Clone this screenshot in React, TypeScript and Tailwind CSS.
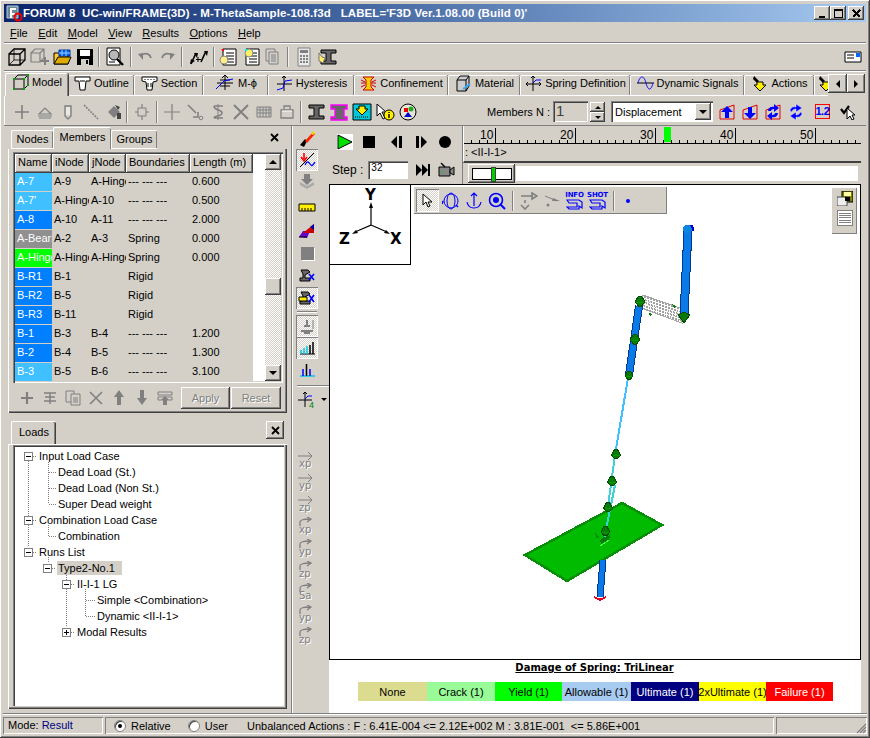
import React from "react";

const RAISED = "shadow-[inset_-1px_-1px_0_#404040,inset_1px_1px_0_#ffffff,inset_-2px_-2px_0_#808080]";
const SUNKEN = "shadow-[inset_1px_1px_0_#808080,inset_2px_2px_0_#404040,inset_-1px_-1px_0_#ffffff]";
const PRESSED = "shadow-[inset_1px_1px_0_#808080,inset_-1px_-1px_0_#ffffff] bg-[repeating-conic-gradient(#ffffff_0_25%,#d4d0c8_0_50%)] bg-[length:2px_2px]";

type P = { children?: React.ReactNode; w?: number; h?: number };
const S = ({ children, w = 18, h = 18 }: P) => (
  <svg width={w} height={h} viewBox={`0 0 ${w} ${h}`} fill="none" className="block shrink-0">{children}</svg>
);

const G = "#808080";
const B = "#0000ff";

/* ---- toolbar icons ---- */
const Cube = ({ c = "#000" }: { c?: string }) => (
  <S w={20} h={20}><path d="M2 7h11v11H2zM2 7l5-5h11v11l-5 5M13 7l5-5" stroke={c} strokeWidth="1.3" /><path d="M2 18l5-5V2M7 13h11" stroke={c} strokeWidth=".8" /></S>
);
const CubePlus = () => (
  <S w={20} h={20}><path d="M1 6h9v9H1zM1 6l4-4h9v9l-4 4M10 6l4-4" stroke={G} strokeWidth="1.2" /><path d="M15 10v8M11 14h8" stroke={G} strokeWidth="2" /></S>
);
const Open = () => (
  <S w={20} h={20}><path d="M2 6h6l1 2h7v9H2z" fill="#ffcc33" stroke="#000" /><path d="M7 3h11v6H7z" fill="#0066ff" stroke="#003399" /><path d="M10 3v6M14 3v6M7 6h11" stroke="#99ccff" /><path d="M2 17l4-7h13l-3 7z" fill="#ddaa00" stroke="#000" /></S>
);
const Save = () => (
  <S w={18} h={18}><path d="M1 1h16v16H1z" fill="#000" /><path d="M4 2h10v6H4z" fill="#fff" /><path d="M5 11h8v6H5z" fill="#d4d0c8" /><path d="M10 12h2v4h-2z" fill="#000" /></S>
);
const Preview = () => (
  <S w={20} h={20}><path d="M2 1h13v17H2z" fill="#fff" stroke="#000" /><circle cx="9" cy="8" r="5" fill="#b8b8b8" stroke="#000" /><path d="M12 12l6 6" stroke="#000" strokeWidth="2.4" /><path d="M4 15h6" stroke="#000" /></S>
);
const Undo = ({ flip = false }: { flip?: boolean }) => (
  <S w={18} h={14}><g transform={flip ? "translate(18 0) scale(-1 1)" : undefined}><path d="M5 5c5-3 9-1 10 3" stroke={G} strokeWidth="1.8" /><path d="M2 4l5 6V3z" fill={G} /></g></S>
);
const ArrowsPM = () => (
  <S w={20} h={18}><path d="M3 16l5-11M13 14l5-11" stroke="#000" strokeWidth="1.6" /><path d="M6 5h4l-1 5zM16 3h4l-1 5zM2 16l1-5 4 2z" fill="#000" /><path d="M10 9v5M8 11.5h5" stroke="#000" /></S>
);
const DocEdit = ({ y = false }: { y?: boolean }) => (
  <S w={20} h={20}><path d="M5 2h13v16H5z" fill="#fff" stroke="#000" /><path d="M8 6h8M8 9h8M8 12h8M8 15h8" stroke="#000" /><circle cx={y ? 8 : 6} cy={y ? 6 : 13} r="4" fill={y ? "#ffee66" : "#ffee88"} stroke="#888" /><path d="M3 2h3v3z" fill={y ? "#00ffff" : "#ff0000"} /></S>
);
const Copies = () => (
  <S w={20} h={20}><path d="M3 2h9v12H3z" stroke={G} /><path d="M6 5h9v12H6z" fill="#d4d0c8" stroke={G} /><path d="M8 8h5M8 10h5M8 12h5M8 14h5" stroke={G} /></S>
);
const Calc = () => (
  <S w={16} h={20}><path d="M2 1h12v18H2z" fill="#e8e8e8" stroke={G} /><path d="M4 3h8v3H4z" fill={G} /><path d="M4 8h2v2H4zM7 8h2v2H7zM10 8h2v2h-2zM4 11h2v2H4zM7 11h2v2H7zM10 11h2v2h-2zM4 14h2v2H4zM7 14h2v2H7zM10 14h2v2h-2z" fill={G} /></S>
);
const Beam = ({ c = "#666", y = false }: { c?: string; y?: boolean }) => (
  <S w={20} h={18}><path d="M3 2h15v3h-5v8h5v3H3v-3h5V5H3z" fill={c} stroke="#000" />{y && <path d="M1 5l3 4 3 1-2 5-4-2z" fill="#ffee66" stroke="#777" />}</S>
);
const Card = () => (
  <S w={18} h={12}><path d="M1 1h16v10H1z" fill="#fff" stroke="#000" /><path d="M12 2h4v4h-4z" fill="#0066ff" /><path d="M3 4h7M3 7h7" stroke="#000" /></S>
);

/* ---- tab icons ---- */
const TModel = () => (
  <S w={17} h={17}><path d="M2 5h10v10H2zM2 5l4-4h10v10l-4 4M12 5l4-4" stroke="#000" /><path d="M1 4h2v2H1zM11 4h2v2h-2zM1 14h2v2H1zM11 14h2v2h-2zM15 0h2v2h-2zM15 10h2v2h-2z" fill="#00a000" /></S>
);
const TOutline = () => (
  <S w={17} h={15}><path d="M1 1h15v4h-4l-1 9H6L5 5H1z" stroke="#000" fill="#fff" /><path d="M6 5h5" stroke="#000" /></S>
);
const TSection = () => (
  <S w={17} h={15}><path d="M1 1h15v4l-4 1-1 8H6L5 6 1 5z" stroke="#000" fill="#fff" /><path d="M4 3v1M7 3v1M10 3v1M13 3v1M7 7v4M10 7v4" stroke="#000" /></S>
);
const TMphi = () => (
  <S w={20} h={18}><path d="M10 1v15M2 9h16" stroke="#000" /><path d="M7 4l3-3 3 3M5 6h10M5 12h10" stroke="#000" /><path d="M1 15l8-8 9-2" stroke={B} /></S>
);
const THyst = () => (
  <S w={17} h={17}><path d="M8 1v15M1 9h15" stroke="#000" /><path d="M6 3l2-2 2 2" stroke="#000" /><path d="M1 15l6-2 2-7 7-1" stroke={B} /></S>
);
const TConf = () => (
  <S w={17} h={17}><path d="M3 2h11l-3 3v7l3 3H3l3-3V5z" fill="#ffcc00" stroke="#cc0000" /><path d="M1 8h5M11 8h5M1 5l4 2M16 5l-4 2M1 12l4-2M16 12l-4-2" stroke="#cc0000" /></S>
);
const TMat = () => (
  <S w={17} h={17}><path d="M2 5h9v11H2zM2 5l3-4h9v10l-3 5M11 5l3-4" fill="#ccc" stroke="#000" /><path d="M8 14l7-5" stroke="#33aaff" strokeWidth="2" /></S>
);
const TSpring = () => (
  <S w={17} h={17}><path d="M8 1v15M1 9h15" stroke="#000" /><path d="M6 3l2-2 2 2M14 7l2 2-2 2M3 7L1 9l2 2" stroke="#000" /><path d="M8 8l3-3h5" stroke={B} /></S>
);
const TWave = () => (
  <S w={17} h={14}><path d="M0 7h17" stroke="#000" /><path d="M1 7c2-8 6-8 8 0s5 8 7 0" stroke={B} /></S>
);
const TAct = () => (
  <S w={17} h={17}><path d="M3 1l5 5-2 2-4-4z" fill="#000" /><path d="M6 7h6v3h3l-6 6-6-6h3z" fill="#ffee00" stroke="#000" /></S>
);

/* ---- row 2 ---- */
const d = { stroke: G, strokeWidth: 1.6 };
const dis: React.ReactNode[] = [
  <S key="a"><path d="M9 2v14M2 9h14" {...d} /></S>,
  <S key="b"><path d="M3 11l6-6 6 6zM2 13h14M3 15h12" {...d} strokeWidth={1.2} /></S>,
  <S key="c"><path d="M6 3h6v10l-3 3-3-3z" stroke={G} fill="#d4d0c8" strokeWidth={1.4} /><path d="M8 4v8M10 4v8" stroke="#fff" /></S>,
  <S key="d"><path d="M2 2l14 14" stroke={G} strokeWidth={1.6} strokeDasharray="2 1" /></S>,
  <S key="e"><path d="M3 9l6-6 6 6-6 6z" fill={G} /><path d="M10 2l5 2-2 3zM12 10h4v6h-4z" fill="#444" /></S>,
];
const dis2: React.ReactNode[] = [
  <S key="f"><path d="M9 1v16M2 9h14" {...d} strokeWidth={1.2} /><path d="M5 5h8v8H5z" fill="#d4d0c8" stroke={G} /></S>,
];
const dis3: React.ReactNode[] = [
  <S key="g"><path d="M9 1v16M1 9h16" {...d} strokeWidth={1.2} /></S>,
  <S key="h"><path d="M2 2l8 8M12 9v5h-5" {...d} /><circle cx="15" cy="15" r="1.8" stroke={G} /></S>,
  <S key="i"><path d="M5 3h9M5 15h9M5 3c0 5 8 3 8 7s-8 2-8 5" {...d} /><path d="M9 1v16" stroke={G} /></S>,
  <S key="j"><path d="M2 2l14 14M16 2L2 16" {...d} strokeWidth={2} /></S>,
  <S key="k"><path d="M2 4h14v10H2zM2 7h14M2 10h14M5 4v10M8 4v10M11 4v10M14 4v10" stroke={G} /></S>,
  <S key="l"><path d="M3 7h12v8H3zM6 7V3h6v4" stroke={G} strokeWidth={1.3} /><path d="M4 8h10" stroke="#fff" /></S>,
];
const ToolBeam = () => <Beam />;
const PinkBeam = () => (
  <S w={20} h={18}><path d="M2 2h16v4h-3v8h3v3H2v-3h4V6H2z" fill="#666" stroke="#ff00ff" strokeWidth={1.4} /></S>
);
const BoxDown = () => (
  <S w={20} h={18}><path d="M1 1h18v16H1z" fill="#00c8d8" stroke="#000" /><path d="M7 3h6v3h3l-6 6-6-6h3z" fill="#ffee00" stroke="#000" /><path d="M3 14h14" stroke="#000" strokeDasharray="1 1" /></S>
);
const CursorInfo = () => (
  <S w={20} h={18}><path d="M2 1v12l3-3 3 6 2-1-3-6h4z" fill="#fff" stroke="#000" /><circle cx="14" cy="12" r="5" fill="#ffee00" stroke="#000" /><path d="M14 9v1M14 11v4" stroke="#000" strokeWidth="1.4" /></S>
);
const Nodes3 = () => (
  <S w={18} h={18}><circle cx="9" cy="9" r="8" fill="#e8e4d8" stroke="#000" /><path d="M5 5h4v4H5z" fill="#e00" /><circle cx="12" cy="6" r="2.5" fill="#2a2" /><path d="M9 9l4 5H5z" fill="#00c" /></S>
);
const House = ({ kind }: { kind: number }) => (
  <S w={16} h={16}>
    <path d="M1 6l14-5v14H1z" stroke="#e00000" fill="none" />
    {kind === 0 && <path d="M8 2l6 6h-4v6H6V8H2z" fill={B} />}
    {kind === 1 && <path d="M6 3h4v6h4l-6 6-6-6h4z" fill={B} />}
    {kind === 2 && <path d="M3 7c0-3 3-5 6-4V0l5 4-5 4V5c-2 0-3 1-3 2zM13 9c0 3-3 5-6 4v3l-5-4 5-4v3c2 0 3-1 3-2z" fill={B} />}
  </S>
);
const Spin = () => (
  <S w={16} h={16}><path d="M2 7c0-3 3-5 6-4V0l6 4-6 4V5C6 5 4 6 4 8zM14 9c0 3-3 5-6 4v3l-6-4 6-4v3c2 0 4-1 4-3z" fill={B} stroke="#fff" strokeWidth=".4" /></S>
);
const Num12 = () => (
  <div className="w-[15px] h-[15px] border-[1.500px] border-[#ff0000] text-[#0000ff] text-[11px] leading-[12px] text-center tracking-[-0.5px] font-bold">1.2</div>
);
const CheckCursor = () => (
  <S w={16} h={16}><path d="M1 5l3 4 5-7" stroke="#000" strokeWidth="2.2" /><path d="M7 4v11l3-3 2 4 2-1-2-4h3z" fill="#fff" stroke="#000" /></S>
);

/* ---- vertical tool column ---- */
const V: { n: React.ReactNode; mt: string; p?: boolean; h: string }[] = [
  { n: <S><path d="M2 15l5-6 2 2-3 6z" fill="#000" /><path d="M7 11l8-9 2 2-8 9z" fill="#ff2200" /><path d="M13 4l3-3 1 2-2 2z" fill="#ffdd00" /></S>, mt: "mt-0", h: "h-[21px]" },
  { n: <S><path d="M2 16L16 2" stroke="#000" /><path d="M6 2v6M3 6l3 4 3-4" stroke="#f00" strokeWidth="1.6" /><path d="M7 14c2-4 3-4 5-1s3 1 5-2" stroke={B} strokeWidth="1.3" /></S>, mt: "mt-0", p: true, h: "h-[22px]" },
  { n: <S><path d="M6 1h6v5h3l-6 6-6-6h3z" fill={G} /><path d="M2 9l7 4 7-4v3l-7 4-7-4z" fill="#aaa" /></S>, mt: "mt-0", h: "h-[22px]" },
  { n: <S h={10}><path d="M1 1h16v7H1z" fill="#ffee00" stroke="#000" /><path d="M4 5v3M7 5v3M10 5v3M13 5v3" stroke="#000" /></S>, mt: "mt-[4px]", h: "h-[22px]" },
  { n: <S><path d="M1 15l4-6h7l-3 7z" fill="#6600cc" /><path d="M16 2v9H5z" fill="#cc0000" /><path d="M12 5l4-3v6z" fill="#0000aa" /><path d="M1 15h8" stroke="#000" /></S>, mt: "mt-[1px]", h: "h-[22px]" },
  { n: <div className="w-[13px] h-[13px] bg-[#808080] shadow-[1px_1px_0_#fff]" />, mt: "mt-0", h: "h-[22px]" },
  { n: <S><path d="M3 4h7l2 2-5 3v3h5v3H2v-3h3V8z" fill="#666" stroke="#000" /><path d="M11 8l5 6M16 8l-5 6" stroke={B} strokeWidth="1.6" /></S>, mt: "mt-0", h: "h-[22px]" },
  { n: <S><path d="M3 3h7l2 2-5 3v4h5v3H2v-3h3V7z" fill="#666" stroke="#000" /><path d="M1 8h8v4H1z" fill="#ffee00" stroke="#000" /><path d="M11 6l5 7M16 6l-5 7" stroke={B} strokeWidth="1.6" /></S>, mt: "mt-[1px]", p: true, h: "h-[22px]" },
];
const V2: { n: React.ReactNode; mt: string; p?: boolean; h: string }[] = [
  { n: <S><path d="M9 3v6M6 9h6M3 14h12M6 16h6" stroke={G} strokeWidth="2" /><path d="M15 3v9" stroke={G} /></S>, mt: "mt-0", p: true, h: "h-[22px]" },
  { n: <S><path d="M2 15h15" stroke="#000" /><path d="M15 3v12M12 6v9" stroke="#000" strokeWidth="1.5" /><path d="M3 11v4M6 9v6M9 7v8" stroke="#00c8e8" strokeWidth="1.5" /></S>, mt: "mt-0", p: true, h: "h-[22px]" },
  { n: <S><path d="M2 14h15" stroke="#00c8e8" strokeWidth="1.5" /><path d="M5 7v7M12 7v7" stroke={B} strokeWidth="1.5" /><path d="M8.500 2v12" stroke="#000" strokeWidth="1.5" /></S>, mt: "mt-[1px]", h: "h-[22px]" },
];
const disSide = ["xp", "yp", "zp", "xp", "yp", "zp", "Sa", "yp", "zp"];
const SideDis = ({ t, i }: { t: string; i: number }) => (
  <div className="w-[18px] h-[22px] relative text-[#808080]">
    <svg width="18" height="10" fill="none" className="block">
      {i < 3 ? <path d="M1 5h14M11 1l4 4-4 4" stroke={G} /> : <path d="M3 9V5c0-2 3-3 10-3M10 0l4 2-4 3" stroke={G} strokeWidth="1.3" />}
    </svg>
    <span className="absolute left-[2px] top-[8px] text-[10px] leading-[10px] font-['DejaVu_Sans'] [text-shadow:1px_1px_0_#fff]">{t}</span>
  </div>
);

/* ---- table ---- */
const rows: [string, string, string, string, string, string][] = [
  ["A-7", "A-9", "A-Hinge", "--- --- ---", "0.600", "bg-[#40c0ff]"],
  ["A-7'", "A-Hinge", "A-10", "--- --- ---", "0.500", "bg-[#40c0ff]"],
  ["A-8", "A-10", "A-11", "--- --- ---", "2.000", "bg-[#0080ff]"],
  ["A-Bearing", "A-2", "A-3", "Spring", "0.000", "bg-[#909090]"],
  ["A-Hinge", "A-Hinge", "A-Hinge", "Spring", "0.000", "bg-[#00ff00]"],
  ["B-R1", "B-1", "", "Rigid", "", "bg-[#0080ff]"],
  ["B-R2", "B-5", "", "Rigid", "", "bg-[#0080ff]"],
  ["B-R3", "B-11", "", "Rigid", "", "bg-[#0080ff]"],
  ["B-1", "B-3", "B-4", "--- --- ---", "1.200", "bg-[#0080ff]"],
  ["B-2", "B-4", "B-5", "--- --- ---", "1.300", "bg-[#0080ff]"],
  ["B-3", "B-5", "B-6", "--- --- ---", "3.100", "bg-[#40c0ff]"],
];
const headers: [string, string][] = [["Name", "w-[37px]"], ["iNode", "w-[37px]"], ["jNode", "w-[37px]"], ["Boundaries", "w-[64px]"], ["Length (m)", "w-[63px]"]];

const tree: { t: string; pl: string; box?: string; sel?: boolean }[] = [
  { t: "Input Load Case", pl: "pl-[11px]", box: "-" },
  { t: "Dead Load (St.)", pl: "pl-[43px]" },
  { t: "Dead Load (Non St.)", pl: "pl-[43px]" },
  { t: "Super Dead weight", pl: "pl-[43px]" },
  { t: "Combination Load Case", pl: "pl-[11px]", box: "-" },
  { t: "Combination", pl: "pl-[43px]" },
  { t: "Runs List", pl: "pl-[11px]", box: "-" },
  { t: "Type2-No.1", pl: "pl-[30px]", box: "-", sel: true },
  { t: "II-I-1 LG", pl: "pl-[49px]", box: "-" },
  { t: "Simple <Combination>", pl: "pl-[82px]" },
  { t: "Dynamic <II-I-1>", pl: "pl-[82px]" },
  { t: "Modal Results", pl: "pl-[49px]", box: "+" },
];

const legend: [string, string][] = [
  ["None", "bg-[#dcdc90] text-black w-[69px]"],
  ["Crack (1)", "bg-[#98fb98] text-black w-[68px]"],
  ["Yield (1)", "bg-[#00ff00] text-black w-[67px]"],
  ["Allowable (1)", "bg-[#a6caf0] text-black w-[69px]"],
  ["Ultimate (1)", "bg-[#000080] text-white w-[68px]"],
  ["2xUltimate (1)", "bg-[#ffff00] text-black w-[67px]"],
  ["Failure (1)", "bg-[#ff0000] text-white w-[67px]"],
];

const tabs: [string, React.ReactNode, string][] = [
  ["Model", <TModel />, "w-[63px]"],
  ["Outline", <TOutline />, "w-[66px]"],
  ["Section", <TSection />, "w-[69px]"],
  ["M-ϕ", <TMphi />, "w-[65px]"],
  ["Hysteresis", <THyst />, "w-[86px]"],
  ["Confinement", <TConf />, "w-[94px]"],
  ["Material", <TMat />, "w-[72px]"],
  ["Spring Definition", <TSpring />, "w-[110px]"],
  ["Dynamic Signals", <TWave />, "w-[114px]"],
  ["Actions", <TAct />, "w-[70px]"],
];

const Sep = ({ h = "h-[20px]", mx = "mx-[6px]" }: { h?: string; mx?: string }) => (
  <div className={`w-[2px] ${h} ${mx} border-l border-[#808080] border-r-white bg-white/70 shrink-0`} />
);
const Tb = ({ children, w = "w-[22.500px]" }: { children: React.ReactNode; w?: string }) => (
  <div className={`${w} flex justify-center items-center shrink-0`}>{children}</div>
);
const Arrow = ({ dir }: { dir: "u" | "d" | "l" | "r" }) => {
  const pts = { u: "0,5 8,5 4,1", d: "0,1 8,1 4,5", l: "5,0 5,8 1,4", r: "1,0 1,8 5,4" }[dir];
  return <svg width={dir === "u" || dir === "d" ? 8 : 6} height={dir === "u" || dir === "d" ? 6 : 8}><polygon points={pts} fill="#000" /></svg>;
};

const Hex = ({ x, y, r = 4.500 }: { x: number; y: number; r?: number }) => (
  <g>
    <polygon points={`${x - r},${y + 1} ${x - 1.500},${y - r} ${x + 1.500},${y - r} ${x + r},${y + 1} ${x + 1.500},${y + r} ${x - 1.500},${y + r}`} fill="#0a7a0a" stroke="#004d00" strokeWidth="1" />
    <path d={`M${x - r + 1} ${y + 1}H${x + r - 1}`} stroke="#00a000" strokeWidth="1" fill="none" />
  </g>
);

const Scene = () => {
  const hatch: React.ReactNode[] = [];
  for (let i = 0; i < 26; i++) {
    const t = i / 25;
    const x1 = 643 + 37 * t, y1 = 295 + 13 * t, x2 = 641 + 41 * t, y2 = 308 + 15 * t;
    hatch.push(<line key={i} x1={x1} y1={y1} x2={x2} y2={y2} stroke="#a0a0a0" strokeWidth="1" strokeDasharray="2 1" />);
  }
  return (
    <svg width="531" height="474" viewBox="330 185 531 474" fill="none" shapeRendering="crispEdges" className="block">
      <polygon points="643,295 680,308 682,323 641,308" fill="#ffffff" stroke="#a8a8a8" />
      {hatch}
      <path d="M688 229L684 316" stroke="#003a88" strokeWidth="9" />
      <path d="M688 229L684 316" stroke="#0a7ae8" strokeWidth="7" />
      <circle cx="687.500" cy="229" r="4.500" fill="#0a86e0" />
      <path d="M691 225l2 3v3" stroke="#0000c0" strokeWidth="2" />
      <path d="M639 306L629 375" stroke="#003a88" strokeWidth="8" />
      <path d="M639 306L629 375" stroke="#0a7ae8" strokeWidth="6" />
      <path d="M628 378L615 455" stroke="#40c0ff" strokeWidth="2" />
      <path d="M615 455L604 535" stroke="#40d0d8" strokeWidth="2" />
      <polygon points="525,555 622,503 662,525 567,581" fill="#00bb00" stroke="#078f07" strokeWidth="2.500" />
      <path d="M615 485L604 540" stroke="#40d0d8" strokeWidth="2" />
      <path d="M603 560L600 597" stroke="#003a88" strokeWidth="7" />
      <path d="M603 560L600 597" stroke="#0a7ae8" strokeWidth="5" />
      <path d="M594 597l6 3 6-3M600 601v-3" stroke="#e00020" strokeWidth="2" />
      <Hex x={616} y={454} />
      <Hex x={612} y={481} />
      <Hex x={608} y={507} />
      <Hex x={605.500} y={531} />
      <path d="M600 540l4-3 6-2-1 6-8 3z" fill="#0a7a0a" />
      <path d="M600 546l9-6" stroke="#40ff40" />
      <path d="M595 533l4 3-2 3z" fill="#078f07" />
      <Hex x={629} y={375} r={4} />
      <Hex x={635} y={339} r={5} />
      <Hex x={640} y={301} r={5} />
      <path d="M678 315l6-3 6 3-6 8z" fill="#0a7a0a" stroke="#004d00" />
      <path d="M672 304l4 2-2 2z" fill="#0a7a0a" />
      <path d="M649 313l3 1-2 2z" fill="#0a7a0a" />
    </svg>
  );
};

const Ruler = () => {
  const t: React.ReactNode[] = [];
  for (let i = 0; i < 50; i++) {
    const x = 31 + i * 8 - 24;
    const major = (i - 3) % 10 === 0;
    t.push(<line key={i} x1={x} x2={x} y1={major ? 2 : 14} y2={17} stroke="#000" />);
  }
  const labels = [10, 20, 30, 40, 50];
  return (
    <svg width="398" height="19" className="block" shapeRendering="crispEdges" fill="none">
      <line x1="0" x2="398" y1="17.500" y2="17.500" stroke="#000" />
      {t}
      {labels.map((l, i) => (
        <text key={l} x={16 + i * 80} y="13" fontSize="12" fill="#000" fontFamily="Liberation Sans">{l}</text>
      ))}
      <rect x="200" y="1" width="7" height="15" fill="#00ff00" />
    </svg>
  );
};

export default function App() {
  return (
    <div className="w-[870px] h-[738px] overflow-hidden bg-[#d4d0c8] text-black text-[11px] leading-[14px] font-['Liberation_Sans',sans-serif] flex flex-col pt-[4px] shadow-[inset_-1px_-1px_0_#404040,inset_1px_1px_0_#ffffff,inset_-2px_-2px_0_#808080]">
      {/* Title */}
      <div className="h-[18px] mx-[4px] shrink-0 flex items-center bg-gradient-to-r from-[#0a246a] to-[#a6caf0] text-white font-bold text-[11.500px] pl-[1px]">
        <svg width="18" height="18" className="shrink-0 block" fill="none"><path d="M2 2h11v12H2z" fill="#6a8a9a" stroke="#bcd" /><path d="M5 4h6v2H7v3h3v2H7v3H5z" fill="#fff" /><circle cx="13" cy="13" r="3.500" stroke="#e00" strokeWidth="2" /></svg>
        <span className="whitespace-pre tracking-[0.1px]">FORUM 8  UC-win/FRAME(3D) - M-ThetaSample-108.f3d   LABEL='F3D Ver.1.08.00 (Build 0)'</span>
        <div className="ml-auto flex mr-[2px]">
          {[
            <path key="m" d="M3 9h6v2H3z" fill="#000" />,
            <path key="x" d="M2.500 2.500h8v8h-8zM2 3h9" stroke="#000" />,
            <path key="c" d="M3 3l7 7M10 3l-7 7" stroke="#000" strokeWidth="1.500" />,
          ].map((p, i) => (
            <div key={i} className={`w-[16px] h-[14px] bg-[#d4d0c8] flex items-center justify-center ${RAISED} ${i === 2 ? "ml-[2px]" : ""}`}>
              <svg width="13" height="13" fill="none" shapeRendering="crispEdges">{p}</svg>
            </div>
          ))}
        </div>
      </div>

      {/* Menu */}
      <div className="h-[21px] mx-[4px] shrink-0 flex items-center gap-[10.500px] pl-[6px] pt-[1px] border-b border-b-[#808080] shadow-[0_1px_0_#fff]">
        {["File", "Edit", "Model", "View", "Results", "Options", "Help"].map((m) => (
          <span key={m}><span className="underline">{m[0]}</span>{m.slice(1)}</span>
        ))}
      </div>

      {/* Main toolbar */}
      <div className="h-[28px] mx-[4px] shrink-0 flex items-center pl-[2px] border-b border-b-[#808080] shadow-[0_1px_0_#fff]">
        <Tb><Cube /></Tb><Tb><CubePlus /></Tb><Tb><Open /></Tb><Tb><Save /></Tb>
        <Sep mx="mx-[2px]" /><Tb w="w-[26px]"><Preview /></Tb><Sep mx="mx-[2px]" />
        <Tb><Undo /></Tb><Tb><Undo flip /></Tb><Sep mx="mx-[2px]" /><Tb w="w-[26px]"><ArrowsPM /></Tb><Sep mx="mx-[2px]" />
        <Tb><DocEdit /></Tb><Tb><DocEdit y /></Tb><Tb><Copies /></Tb><Sep mx="mx-[2px]" />
        <Tb w="w-[26px]"><Calc /></Tb><Tb w="w-[22px]"><Beam y /></Tb>
        <div className="ml-auto mr-[4px]"><Card /></div>
      </div>

      {/* Tabs */}
      <div className="h-[24px] mt-[1px] mx-[4px] shrink-0 flex items-end relative">
        {tabs.map(([t, ic, w], i) => (
          <div key={t} className={`${w} shrink-0 flex items-center justify-center gap-[3px] bg-[#d4d0c8] border-t border-l border-white rounded-t-[2px] shadow-[inset_-1px_0_0_#808080,1px_0_0_#404040] ${i === 0 ? "h-[23px] z-10 pb-[6px] ml-[1px]" : "h-[21px] border-b border-b-white pb-[5px]"}`}>
            {ic}<span className="whitespace-nowrap">{t}</span>
          </div>
        ))}
        <div className="w-[14px] h-[21px] overflow-hidden border-t border-l border-white border-b border-b-white pl-[2px] pb-[5px] flex items-center shrink-0">
          <TAct />
        </div>
        <div className={`w-[19px] h-[19px] mb-[3px] flex items-center justify-center ${RAISED}`}><Arrow dir="l" /></div>
        <div className={`w-[18px] h-[19px] mb-[3px] flex items-center justify-center ${RAISED}`}><Arrow dir="r" /></div>
      </div>

      {/* Secondary toolbar */}
      <div className="h-[29px] mx-[4px] shrink-0 flex items-center pl-[5px] pt-[2px] border-l border-white">
        {dis.map((n, i) => <Tb key={i} w="w-[23px]">{n}</Tb>)}
        <Sep h="h-[22px]" mx="mx-[1px]" />
        {dis2.map((n, i) => <Tb key={i} w="w-[25px]">{n}</Tb>)}
        <div className="w-[6px] flex justify-center shrink-0"><Sep h="h-[22px]" mx="mx-0" /></div>
        {dis3.map((n, i) => <Tb key={i} w="w-[23px]">{n}</Tb>)}
        <div className="w-[6px] flex justify-center shrink-0"><Sep h="h-[22px]" mx="mx-0" /></div>
        <Tb w="w-[23px]"><ToolBeam /></Tb><Tb w="w-[23px]"><PinkBeam /></Tb><Tb w="w-[23px]"><BoxDown /></Tb><Tb w="w-[23px]"><CursorInfo /></Tb><Tb w="w-[23px]"><Nodes3 /></Tb>
        <span className="w-[131px] text-right whitespace-nowrap">Members N :</span>
        <div className={`w-[35px] h-[21px] ml-[3px] pl-[3px] text-[15px] leading-[20px] text-[#404040] ${SUNKEN}`}>1</div>
        <div className="w-[15px] ml-[2px] flex flex-col">
          <div className={`h-[10px] flex items-center justify-center ${RAISED}`}><svg width="6" height="4"><polygon points="0,4 6,4 3,1" fill="#000" /></svg></div>
          <div className={`h-[10px] flex items-center justify-center ${RAISED}`}><svg width="6" height="4"><polygon points="0,1 6,1 3,4" fill="#000" /></svg></div>
        </div>
        <div className={`w-[102px] h-[21px] ml-[6px] bg-white flex items-center pl-[4px] pr-[2px] ${SUNKEN}`}>
          <span className="flex-1">Displacement</span>
          <div className={`w-[16px] h-[17px] bg-[#d4d0c8] flex items-center justify-center ${RAISED}`}><Arrow dir="d" /></div>
        </div>
        <div className="ml-[2px] flex items-center">
          <Tb w="w-[23px]"><House kind={0} /></Tb>
          <Tb w="w-[23px]"><House kind={1} /></Tb>
          <Tb w="w-[23px]"><House kind={2} /></Tb>
          <Tb w="w-[23px]"><Spin /></Tb>
          <Tb w="w-[30px]"><Num12 /></Tb>
          <Tb w="w-[22px]"><CheckCursor /></Tb>
        </div>
      </div>

      {/* Body */}
      <div className="flex-1 min-h-0 flex mx-[4px] border-t border-t-[#808080]">
        {/* Left column */}
        <div className="w-[283px] shrink-0 flex flex-col pt-px pl-[4px]">
          <div className="h-[286px] shrink-0 flex flex-col">
            <div className="h-[22px] shrink-0 flex items-end relative pl-[3px]">
              {[["Nodes", "w-[42px]", false], ["Members", "w-[58px]", true], ["Groups", "w-[46px]", false]].map(([t, w, a]) => (
                <div key={t as string} className={`${w} flex items-center justify-center border-t border-l border-white shadow-[inset_-1px_0_0_#808080] rounded-t-[2px] ${a ? "h-[22px] z-10 bg-[#d4d0c8] pb-[3px]" : "h-[19px] border-b border-b-white pb-[1px]"}`}>{t as string}</div>
              ))}
              <span className="ml-auto mr-[8px] mb-[7px]">
                <svg width="9" height="9" fill="none" className="block"><path d="M1 1l7 7M8 1L1 8" stroke="#000" strokeWidth="1.800" /></svg>
              </span>
            </div>
            <div className="flex-1 min-h-0 flex flex-col border-l border-white pt-[3px] px-[4px] shadow-[inset_-1px_-1px_0_#404040,inset_-2px_-2px_0_#808080]">
              <div className={`h-[231px] w-[270px] p-[2px] shrink-0 flex ${SUNKEN}`}>
                <div className="w-[250px] bg-white shrink-0 overflow-hidden">
                  <div className="flex h-[19px] w-[238px]">
                    {headers.map(([h, w]) => <div key={h} className={`${w} ${RAISED} bg-[#d4d0c8] pl-[3px] leading-[17px] whitespace-nowrap overflow-hidden shrink-0`}>{h}</div>)}
                  </div>
                  {rows.map((r) => (
                    <div key={r[0]} className="flex h-[19px] w-[238px] bg-[#d4d0c8] leading-[17px]">
                      <div className={`w-[37px] ${r[5]} mb-px text-white pl-[2px] overflow-hidden whitespace-nowrap shrink-0`}>{r[0]}</div>
                      <div className="w-[37px] pl-[2px] overflow-hidden whitespace-nowrap shrink-0">{r[1]}</div>
                      <div className="w-[37px] pl-[2px] overflow-hidden whitespace-nowrap shrink-0">{r[2]}</div>
                      <div className="w-[64px] pl-[2px] whitespace-nowrap shrink-0">{r[3]}</div>
                      <div className="w-[63px] pl-[2px] whitespace-nowrap shrink-0">{r[4]}</div>
                    </div>
                  ))}
                </div>
                <div className="flex-1 flex flex-col bg-[repeating-conic-gradient(#ffffff_0_25%,#d4d0c8_0_50%)] bg-[length:2px_2px]">
                  <div className={`h-[16px] bg-[#d4d0c8] flex items-center justify-center ${RAISED}`}><Arrow dir="u" /></div>
                  <div className={`h-[17px] mt-[108px] bg-[#d4d0c8] ${RAISED}`} />
                  <div className={`h-[16px] mt-auto bg-[#d4d0c8] flex items-center justify-center ${RAISED}`}><Arrow dir="d" /></div>
                </div>
              </div>
              <div className="flex items-center h-[25px] pl-[2px] mt-[2px]">
                <Tb w="w-[23px]"><S w={14} h={14}><path d="M7 1v12M1 7h12" stroke={G} strokeWidth="2.200" /></S></Tb>
                <Tb w="w-[23px]"><S w={14} h={14}><path d="M1 2h12M2 6h10M7 2v11M1 10h12" stroke={G} strokeWidth="1.500" /></S></Tb>
                <Tb w="w-[23px]"><S w={16} h={16}><path d="M1 1h8v11H1z" fill="#d4d0c8" stroke={G} /><path d="M6 4h9v11H6z" fill="#d4d0c8" stroke={G} /><path d="M8 8h5M8 10h5M8 12h5" stroke={G} /></S></Tb>
                <Tb w="w-[23px]"><S w={14} h={14}><path d="M1 1l12 12M13 1L1 13" stroke={G} strokeWidth="1.600" /></S></Tb>
                <Tb w="w-[23px]"><S w={12} h={15}><path d="M6 0l5 7H8v8H4V7H1z" fill={G} /></S></Tb>
                <Tb w="w-[23px]"><S w={12} h={15}><path d="M6 15l5-7H8V0H4v8H1z" fill={G} /></S></Tb>
                <Tb w="w-[24px]"><S w={16} h={16}><path d="M1 2h14v3H1zM1 7h14v3H1z" fill="#d4d0c8" stroke={G} /><path d="M8 6l4 4h-2v5H6v-5H4z" fill={G} /></S></Tb>
                <div className={`w-[49px] h-[22px] ml-[4px] flex items-center justify-center text-[#808080] [text-shadow:1px_1px_0_#fff] ${RAISED}`}>Apply</div>
                <div className={`w-[50px] h-[22px] ml-[1px] flex items-center justify-center text-[#808080] [text-shadow:1px_1px_0_#fff] ${RAISED}`}>Reset</div>
              </div>
            </div>
          </div>

          {/* Splitter */}
          <div className="h-[7px] shrink-0" />

          {/* Loads */}
          <div className="h-[289px] shrink-0 flex flex-col">
            <div className="h-[24px] shrink-0 flex items-end pl-[3px] relative">
              <div className="w-[45px] h-[23px] flex items-center justify-center border-t border-l border-white rounded-t-[2px] shadow-[inset_-1px_0_0_#404040,inset_-2px_0_0_#808080] pb-[3px] z-10">Loads</div>
              <div className={`ml-auto mr-[3px] mb-[5px] w-[18px] h-[18px] flex items-center justify-center ${RAISED}`}>
                <svg width="9" height="9" fill="none"><path d="M1 1l7 7M8 1L1 8" stroke="#000" strokeWidth="1.800" /></svg>
              </div>
            </div>
            <div className="flex-1 min-h-0 flex flex-col border-l border-t border-white pl-[4px] pr-[3px] pb-[3px] shadow-[inset_-1px_-1px_0_#404040,inset_-2px_-2px_0_#808080]">
              <div className={`flex-1 bg-white relative pt-[3px] ${SUNKEN}`}>
                {/* dotted guides of the tree */}
                <svg width="120" height="200" className="absolute left-0 top-0" fill="none" shapeRendering="crispEdges" strokeDasharray="1 1" stroke="#808080">
                  <path d="M15.500 16v86M35.500 17v42M35.500 80v11M35.500 112v6M53.500 128v54M72.500 144v27" />
                  <path d="M20 11.500h4M20 75.500h4M20 107.500h4M39 123.500h4M58 139.500h4M58 187.500h4" />
                  <path d="M35.500 27.500h8M35.500 43.500h8M35.500 59.500h8M35.500 91.500h8M72.500 155.500h10M72.500 171.500h10" />
                </svg>
                {tree.map((r) => (
                  <div key={r.t} className={`h-[16px] flex items-center relative whitespace-nowrap ${r.pl}`}>
                    {r.box && (
                      <div className="w-[9px] h-[9px] border border-[#808080] bg-white shrink-0 mr-[4px] relative">
                        <div className="absolute left-[1px] top-[3px] w-[5px] h-px bg-black" />
                        {r.box === "+" && <div className="absolute left-[3px] top-[1px] w-px h-[5px] bg-black" />}
                      </div>
                    )}
                    <span className={`ml-[1px] px-[1px] ${r.sel ? "bg-[#d4d0c8] pr-[7px]" : ""}`}>{r.t}</span>
                  </div>
                ))}
              </div>
            </div>
          </div>
        </div>

        {/* Splitter */}
        <div className="w-[5px] shrink-0 border-r border-[#808080]" />

        {/* Tool column */}
        <div className="w-[37px] shrink-0 flex flex-col items-start pl-[1px] pt-[2px] border-l border-white">
          {V.map((v, i) => (
            <div key={i} className={`w-[22px] ${v.h} flex items-center justify-center ml-[2px] ${v.mt} ${v.p ? PRESSED : ""}`}>{v.n}</div>
          ))}
          <div className="w-[20px] ml-[3px] h-[2px] my-[2px] border-t border-[#808080] bg-white" />
          {V2.map((v, i) => (
            <div key={i} className={`w-[22px] ${v.h} flex items-center justify-center ml-[2px] ${v.mt} ${v.p ? PRESSED : ""}`}>{v.n}</div>
          ))}
          <div className="w-[32px] ml-[3px] h-[2px] mt-[3px] border-t border-[#808080] bg-white" />
          <div className="flex items-center ml-[3px] mt-[4px]">
            <S w={20} h={18}><path d="M8 1v15M1 9h14" stroke="#000" /><path d="M6 3l2-2 2 2" stroke="#000" /><path d="M8 8l3-3h4" stroke={B} /><text x="12" y="17" fontSize="9" fill="#008000" fontFamily="Liberation Sans">4</text></S>
            <svg width="6" height="4" className="ml-[4px]"><polygon points="0,0 6,0 3,3" fill="#000" /></svg>
          </div>
          <div className="mt-[42px] ml-[3px] flex flex-col">
            {disSide.map((t, i) => <SideDis key={i} t={t} i={i} />)}
          </div>
        </div>

        {/* Right column */}
        <div className="flex-1 min-w-0 flex flex-col pr-[5px]">
          {/* player + ruler */}
          <div className="h-[58px] shrink-0 flex">
            <div className="w-[134px] shrink-0 border-r border-r-[#808080]">
              <div className="flex items-center h-[32px] pl-[8px]">
                <div className="w-[16px] h-[16px] bg-white mr-[10px] relative">
                  <svg width="16" height="16"><polygon points="1,1 15,8 1,15" fill="#00e000" stroke="#000" /></svg>
                </div>
                <div className="w-[12px] h-[12px] bg-black mr-[16px]" />
                <svg width="12" height="12" className="mr-[13px]"><rect x="8" width="3" height="12" fill="#000" /><polygon points="6,0 6,12 0,6" fill="#000" /></svg>
                <svg width="12" height="12" className="mr-[11px]"><rect width="3" height="12" fill="#000" /><polygon points="5,0 5,12 11,6" fill="#000" /></svg>
                <div className="w-[12px] h-[12px] rounded-full bg-black" />
              </div>
              <div className="flex items-center h-[22px] pl-[3px] pt-[1px]">
                <span className="text-[12px]">Step :</span>
                <div className={`w-[40px] h-[18px] ml-[5px] bg-white pl-[3px] text-[10px] leading-[14px] ${SUNKEN}`}>32</div>
                <svg width="15" height="12" className="ml-[8px]"><polygon points="0,0 6,6 0,12" fill="#000" /><polygon points="6,0 12,6 6,12" fill="#000" /><rect x="12" width="2" height="12" fill="#000" /></svg>
                <svg width="17" height="16" className="ml-[7px]" fill="none"><path d="M1 5h11v9H1z" fill="#888" stroke="#000" /><path d="M12 8l4-3v8l-4-2z" fill="#888" stroke="#000" /><path d="M3 1l4 4" stroke="#000" strokeWidth="1.500" /><path d="M3 10h2" stroke="#0c0" /></svg>
              </div>
            </div>
            <div className="flex-1 min-w-0 flex flex-col">
              <div className="h-[20px] shrink-0 border-l border-white overflow-hidden"><Ruler /></div>
              <div className="h-[17px] shrink-0 border-l border-white pl-[1px] leading-[12px] border-b-2 border-b-[#404040] whitespace-pre">: &lt;II-I-1&gt;</div>
              <div className="flex-1 flex items-center pl-[5px] pr-[3px]">
                <div className={`w-[47px] h-[19px] flex items-center justify-center shrink-0 ${RAISED}`}>
                  <div className="w-[40px] h-[12px] border border-black bg-white relative">
                    <div className="absolute left-[18px] -top-[2px] w-[5px] h-[15px] bg-[#00d000] border border-[#404040]" />
                  </div>
                </div>
                <div className="flex-1 h-[15px] bg-white ml-[1px]" />
              </div>
            </div>
          </div>

          {/* Canvas */}
          <div className="flex-1 min-h-0 flex flex-col bg-white border-t border-black">
            <div className="h-[475px] shrink-0 border-l border-r border-b border-black relative">
              <div className="absolute left-0 top-0"><Scene /></div>
              {/* axis box */}
              <div className="absolute left-0 top-0 w-[81px] h-[80px] bg-white border-r border-b border-black">
                <svg width="80" height="80" fill="none">
                  <path d="M41 20v20L25 47M41 40l16 7" stroke="#000" strokeWidth="1.200" />
                  <path d="M41 17l-2 6h4zM22 49l6-1-2-3zM60 49l-6-1 2-3z" fill="#000" />
                  <text x="35" y="15" fontSize="15" fontWeight="bold" fill="#000" fontFamily="DejaVu Sans">Y</text>
                  <text x="9" y="59" fontSize="15" fontWeight="bold" fill="#000" fontFamily="DejaVu Sans">Z</text>
                  <text x="60" y="59" fontSize="15" fontWeight="bold" fill="#000" fontFamily="DejaVu Sans">X</text>
                </svg>
              </div>
              {/* view toolbar */}
              <div className="absolute left-[84px] top-[2px] w-[253px] h-[27px] bg-[#d4d0c8] shadow-[inset_-1px_-1px_0_#808080] flex items-center pl-[2px]">
                <div className={`w-[23px] h-[23px] flex items-center justify-center ${PRESSED}`}>
                  <svg width="12" height="16" fill="none"><path d="M1 1v11l3-3 2 5 2-1-2-4h4z" fill="#fff" stroke="#000" /></svg>
                </div>
                <Tb w="w-[23px]"><S w={18} h={18}><circle cx="9" cy="9" r="7" stroke={B} /><ellipse cx="9" cy="9" rx="4" ry="8" stroke={B} /><path d="M1 9l-1 3M14 13l2 2" stroke={B} strokeWidth="1.500" /></S></Tb>
                <Tb w="w-[23px]"><S w={16} h={18}><path d="M8 1v13M5 4l3-3 3 3M1 10c1 5 4 6 7 6s6-1 7-6" stroke={B} strokeWidth="1.200" /></S></Tb>
                <Tb w="w-[24px]"><S w={18} h={18}><circle cx="8" cy="8" r="6.500" stroke={B} strokeWidth="1.600" /><circle cx="8" cy="8" r="3" fill={B} /><path d="M12 12l5 5" stroke={B} strokeWidth="2" /></S></Tb>
                <Sep h="h-[20px]" mx="mx-[3px]" />
                <Tb w="w-[23px]"><S w={18} h={18}><path d="M1 4h12M12 1l5 3-5 3zM5 8v3M1 13l4 4 4-4" stroke={G} strokeWidth="1.600" /></S></Tb>
                <Tb w="w-[23px]"><S w={18} h={14}><path d="M2 2l12 5" stroke={G} /><path d="M10 4l7 3H9z" fill={G} /><circle cx="5" cy="11" r="1.500" fill={G} /></S></Tb>
                {["INFO", "SHOT"].map((t) => (
                  <div key={t} className="w-[23px] flex flex-col items-center shrink-0">
                    <span className="text-[7px] leading-[7px] font-bold text-[#0000ff] font-['DejaVu_Sans'] tracking-[-0.2px]">{t}</span>
                    <svg width="18" height="11" fill="none"><path d="M1 1h12l3 2v6l-3-2v3H3L1 8h10V4H3z" stroke={B} strokeWidth="1.200" /></svg>
                  </div>
                ))}
                <Sep h="h-[20px]" mx="mx-[4px]" />
                <div className="w-[4px] h-[4px] rounded-full bg-[#0000ff] ml-[7px]" />
              </div>
              {/* save panel */}
              <div className="absolute right-[3px] top-[3px] w-[25px] h-[46px] bg-[#d4d0c8] shadow-[inset_-1px_-1px_0_#808080] flex flex-col items-center pt-[3px] gap-[4px]">
                <svg width="16" height="15" fill="none"><path d="M5 0h11v11H5z" fill="#808000" stroke="#000" /><path d="M7 1h7v4H7z" fill="#ffffaa" /><path d="M0 6h10v9H0z" fill="#eee" stroke="#444" /><path d="M8 6h5v4H8z" fill="#000" /></svg>
                <div className="w-[16px] h-[16px] bg-white border border-[#808080] flex flex-col justify-around p-[1px]">
                  {[0, 1, 2, 3, 4].map((i) => <div key={i} className="h-px bg-[#808080]" />)}
                </div>
              </div>
            </div>
            {/* Legend */}
            <div className="flex-1 flex flex-col items-center pt-px pr-[4px]">
              <div className="font-bold underline font-['DejaVu_Sans'] text-[10px] leading-[14px] ml-[3px]">Damage of Spring: TriLinear</div>
              <div className="flex mt-[7px] h-[19px] ml-[5px]">
                {legend.map(([t, c]) => (
                  <div key={t} className={`${c} shrink-0 flex items-center justify-center whitespace-nowrap`}>{t}</div>
                ))}
              </div>
            </div>
          </div>
        </div>
      </div>

      {/* Status bar */}
      <div className="h-[23px] mx-[3px] mb-[2px] shrink-0 flex items-stretch border-t border-t-[#808080] shadow-[inset_0_1px_0_#fff] pt-[3px] pb-[2px] gap-[2px]">
        <div className="w-[100px] shrink-0 shadow-[inset_1px_1px_0_#808080,inset_-1px_-1px_0_#fff] pl-[5px] leading-[16px]">Mode: <span className="text-[#000080]">Result</span></div>
        <div className="flex-1 min-w-0 shadow-[inset_1px_1px_0_#808080,inset_-1px_-1px_0_#fff] flex items-center pl-[9px] whitespace-pre">
          <div className="w-[12px] h-[12px] rounded-full bg-white border border-[#808080] flex items-center justify-center shadow-[inset_1px_1px_0_#404040]"><div className="w-[4px] h-[4px] rounded-full bg-black" /></div>
          <span className="ml-[5px]">Relative</span>
          <div className="w-[12px] h-[12px] ml-[17px] rounded-full bg-white border border-[#808080] shadow-[inset_1px_1px_0_#404040]" />
          <span className="ml-[5px]">User</span>
          <span className="ml-[19px]">Unbalanced Actions : F : 6.41E-004 &lt;= 2.12E+002 M : 3.81E-001  &lt;= 5.86E+001</span>
        </div>
        <div className="w-[91px] shrink-0 shadow-[inset_1px_1px_0_#808080,inset_-1px_-1px_0_#fff] relative">
          <svg width="12" height="12" className="absolute right-0 bottom-0" fill="none"><path d="M11 2L2 11M11 5l-6 6M11 8l-3 3" stroke="#808080" strokeWidth="1.200" /></svg>
        </div>
      </div>
    </div>
  );
}
